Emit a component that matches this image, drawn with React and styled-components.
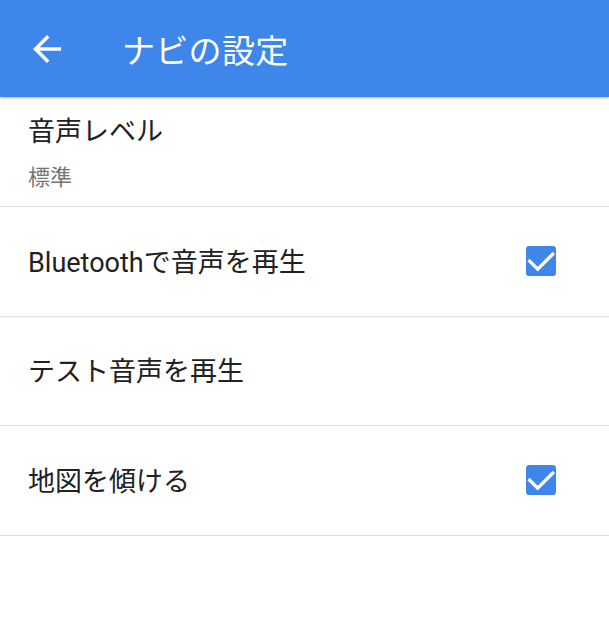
import React from "react";
import styled, { createGlobalStyle } from "styled-components";

const Global = createGlobalStyle`
  html, body { margin: 0; padding: 0; background: #ffffff; }
  body { font-family: Roboto, "Noto Sans CJK JP", sans-serif; }
`;

const Page = styled.div`
  width: 609px;
  min-height: 640px;
  background: #ffffff;
  display: flex;
  flex-direction: column;
`;

const AppBar = styled.header`
  height: 97px;
  background: #3e86ea;
  display: flex;
  align-items: center;
  box-shadow: 0 1px 3px rgba(0, 0, 0, 0.28);
  position: relative;
  z-index: 1;
`;

const BackButton = styled.button`
  width: 42px;
  height: 42px;
  margin-left: 26px;
  padding: 0;
  border: none;
  background: transparent;
  display: flex;
  align-items: center;
  justify-content: center;
  color: #ffffff;
`;

const Title = styled.h1`
  margin: 0 0 0 54px;
  font-size: 33px;
  font-weight: 400;
  color: #ffffff;
  letter-spacing: 0.3px;
`;

const List = styled.div`
  display: flex;
  flex-direction: column;
`;

const Row = styled.div`
  display: flex;
  align-items: center;
  justify-content: space-between;
  padding: ${(p) => (p.$twoLine ? "16px 28px 13px" : "0 48px 0 28px")};
  height: ${(p) => (p.$twoLine ? "auto" : "108.5px")};
  border-bottom: 1px solid #e0e0e0;
`;

const TextBlock = styled.div`
  display: flex;
  flex-direction: column;
`;

const Label = styled.div`
  font-size: 27px;
  line-height: 38px;
  color: #212121;
  padding-top: ${(p) => (p.$nudge ? "3px" : "0")};
`;

const Sub = styled.div`
  font-size: 22px;
  line-height: 30px;
  margin-top: 12px;
  color: #757575;
`;

const Check = () => (
  <svg width="40" height="40" viewBox="0 0 24 24">
    <rect x="3" y="3" width="18" height="18" rx="2" fill="#3e86ea" />
    <path
      d="M5.2 12.1l4.8 4.8 9-9"
      fill="none"
      stroke="#ffffff"
      strokeWidth="2"
      strokeLinecap="square"
    />
  </svg>
);

const ArrowBack = () => (
  <svg width="42" height="42" viewBox="0 0 24 24" fill="currentColor">
    <path d="M20 11H7.83l5.59-5.59L12 4l-8 8 8 8 1.41-1.41L7.83 13H20v-2z" />
  </svg>
);

export default function App() {
  return (
    <Page>
      <Global />
      <AppBar>
        <BackButton aria-label="戻る">
          <ArrowBack />
        </BackButton>
        <Title>ナビの設定</Title>
      </AppBar>
      <List>
        <Row $twoLine>
          <TextBlock>
            <Label>音声レベル</Label>
            <Sub>標準</Sub>
          </TextBlock>
        </Row>
        <Row>
          <Label $nudge>Bluetoothで音声を再生</Label>
          <Check />
        </Row>
        <Row>
          <Label $nudge>テスト音声を再生</Label>
        </Row>
        <Row>
          <Label $nudge>地図を傾ける</Label>
          <Check />
        </Row>
      </List>
    </Page>
  );
}
